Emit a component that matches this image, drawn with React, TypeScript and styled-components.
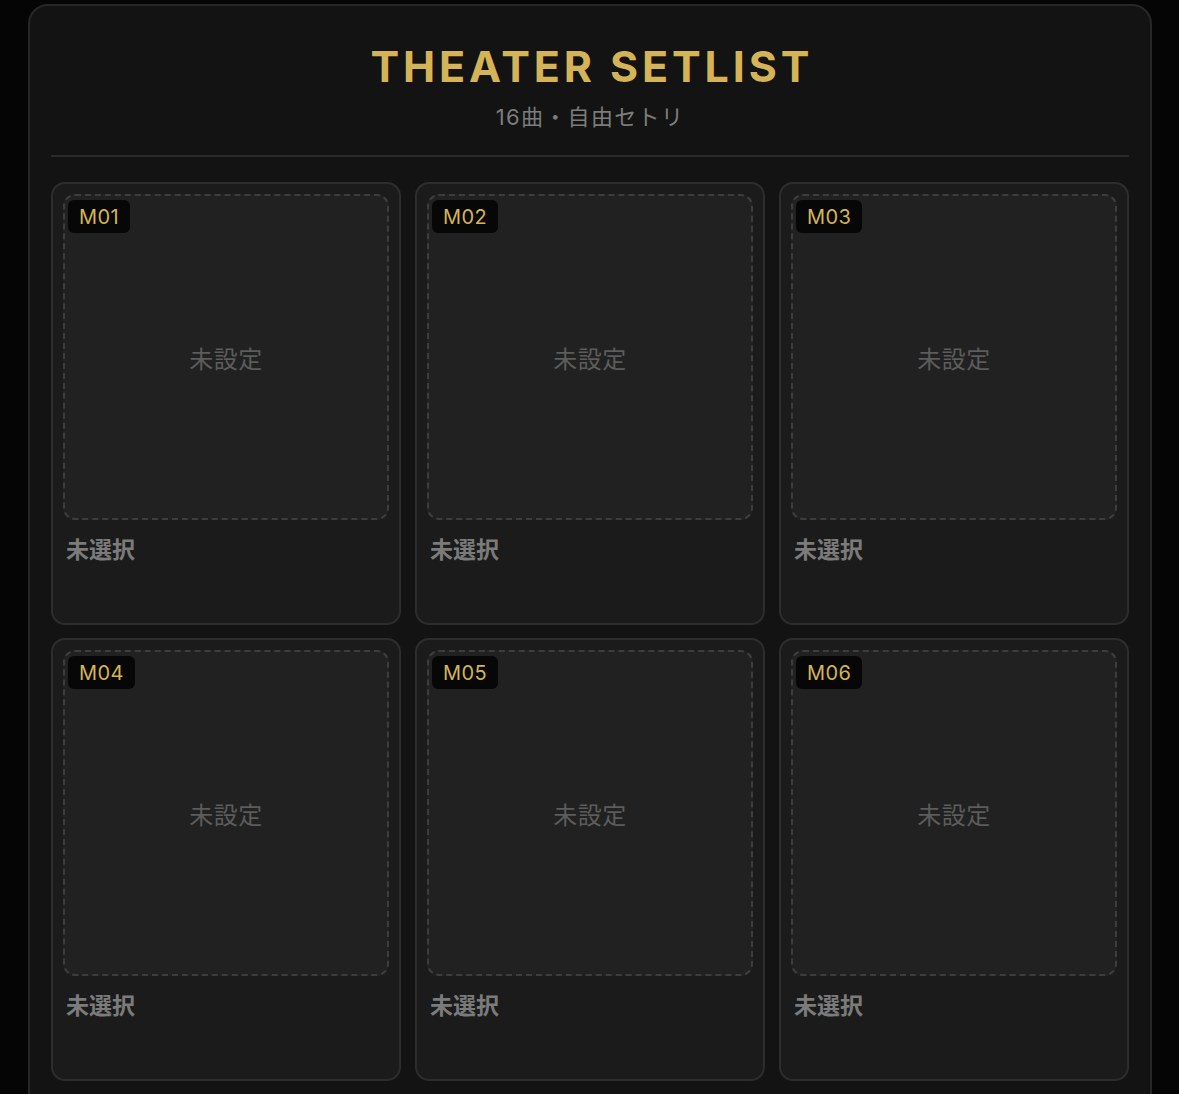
import styled, { createGlobalStyle } from "styled-components";

const GlobalStyle = createGlobalStyle`
    html, body {
        margin: 0;
        padding: 0;
        background: #050505;
    }
    body {
        font-family: Inter, "Noto Sans CJK JP", sans-serif;
        overflow: hidden;
    }
`

const Page = styled.div`
    padding: 4px 27px 0 28px;
    min-height: 1094px;
    box-sizing: border-box;
`

const Panel = styled.div`
    background: #131313;
    border: 2px solid #272727;
    border-radius: 20px;
    padding: 0 21px 40px 21px;
`

const Header = styled.header`
    display: flex;
    flex-direction: column;
    align-items: center;
    padding: 35px 0 24px 0;
    border-bottom: 2px solid #2a2a2a;
`

const Title = styled.h1`
    margin: 0;
    font-family: Inter, sans-serif;
    font-size: 43px;
    font-weight: 700;
    letter-spacing: 0.09em;
    line-height: 50px;
    color: #d5b457;
    padding-left: 0.09em;
`

const Subtitle = styled.div`
    margin-top: 12px;
    font-family: Inter, "Noto Sans CJK JP", sans-serif;
    font-size: 22px;
    line-height: 28px;
    color: #7c7c7c;
    letter-spacing: 0.06em;
`

const Grid = styled.div`
    display: grid;
    grid-template-columns: repeat(3, 1fr);
    gap: 13px 14px;
    margin-top: 25px;
`

const Card = styled.div`
    display: flex;
    flex-direction: column;
    background: #1b1b1b;
    border: 2px solid #2d2d2d;
    border-radius: 14px;
    padding: 10px;
    height: 443px;
    box-sizing: border-box;
`

const Cover = styled.div`
    position: relative;
    aspect-ratio: 1 / 1;
    display: flex;
    align-items: center;
    justify-content: center;
    background: #212121;
    border: 2px dashed #3d3d3d;
    border-radius: 12px;
`

const Badge = styled.span`
    position: absolute;
    top: 4px;
    left: 3px;
    padding: 0 11px;
    height: 33px;
    display: flex;
    align-items: center;
    background: #070707;
    border-radius: 6px;
    color: #d5b457;
    font-family: Inter, sans-serif;
    font-size: 20px;
    letter-spacing: 0.02em;
`

const Placeholder = styled.span`
    font-family: "Noto Sans CJK JP", sans-serif;
    font-size: 24px;
    color: #5c5c5c;
    letter-spacing: 0.02em;
`

const SongName = styled.div`
    margin: 13px 0 0 3px;
    font-family: "Noto Sans CJK JP", sans-serif;
    font-size: 23px;
    font-weight: 700;
    line-height: 30px;
    color: #7b7b7b;
`

const slots = Array.from({ length: 16 }, (_, i) => `M${String(i + 1).padStart(2, "0")}`);

export default function App() {
    return (
        <Page>
            <GlobalStyle />
            <Panel>
                <Header>
                    <Title>THEATER SETLIST</Title>
                    <Subtitle>16曲・自由セトリ</Subtitle>
                </Header>
                <Grid>
                    {slots.map((slot) => (
                        <Card key={slot}>
                            <Cover>
                                <Badge>{slot}</Badge>
                                <Placeholder>未設定</Placeholder>
                            </Cover>
                            <SongName>未選択</SongName>
                        </Card>
                    ))}
                </Grid>
            </Panel>
        </Page>
    );
}
